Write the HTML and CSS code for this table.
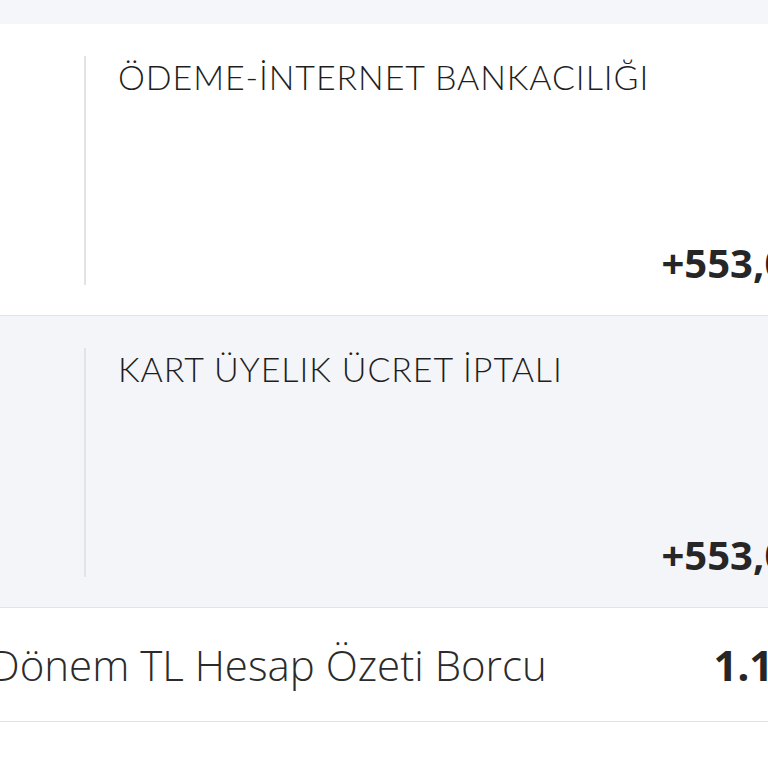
FILE: index.html
```html
<!DOCTYPE html>
<html lang="tr">
<head>
    <meta name="viewport" content="width=device-width, initial-scale=1">
    <title>Hesap Hareketleri</title>
    <link rel="stylesheet" href="styles.css">
</head>
<body>

<div class="page">
    <div class="top-strip"></div>

    <div class="txn">
        <div class="txn-body">
            <div class="txn-desc">ÖDEME-İNTERNET BANKACILIĞI</div>
            <div class="txn-amount">+553,00 TL</div>
        </div>
    </div>

    <div class="txn txn-alt">
        <div class="txn-body">
            <div class="txn-desc">KART ÜYELIK ÜCRET İPTALI</div>
            <div class="txn-amount">+553,00 TL</div>
        </div>
    </div>

    <div class="summary">
        <span class="summary-label">Dönem TL Hesap Özeti Borcu</span>
        <span class="summary-value">1.106,00 TL</span>
    </div>
</div>

</body>
</html>
```

FILE: styles.css
```css
html, body {
    margin: 0;
    padding: 0;
    background-color: #fff;
    overflow: hidden;
}

.page {
    width: 1000px;
    margin-left: -40px;
    font-family: "Lato", "Open Sans", sans-serif;
    color: #2d2d2d;
}

.top-strip {
    height: 24px;
    background-color: #f5f6f9;
}

.txn {
    display: flex;
    padding: 32px 0 30px;
    border-bottom: 1px solid #e2e3e7;
    background-color: #fff;
}

.txn-alt {
    background-color: #f4f5f9;
}

.txn-body {
    flex: 1;
    height: 229px;
    margin-left: 124px;
    padding-left: 32px;
    border-left: 2px solid #e1e3e6;
    display: flex;
    flex-direction: column;
    justify-content: space-between;
    box-sizing: border-box;
}

.txn-desc {
    font-size: 34px;
    font-weight: 300;
    line-height: 40px;
    margin-top: 1px;
    letter-spacing: 0.9px;
    color: #1e1e1e;
}

.txn-amount {
    align-self: flex-end;
    margin-right: 94px;
    font-family: "Noto Sans", "Open Sans", sans-serif;
    font-weight: 700;
    font-size: 40px;
    line-height: 44px;
    color: #262626;
    white-space: nowrap;
}

.summary {
    height: 113px;
    display: flex;
    align-items: center;
    justify-content: space-between;
    padding: 0 20px 0 30px;
    border-bottom: 1px solid #e2e3e7;
}

.summary-label {
    font-family: "Open Sans", sans-serif;
    font-weight: 300;
    font-size: 42px;
    color: #2b2b2b;
}

.summary-value {
    font-family: "Noto Sans", "Open Sans", sans-serif;
    font-weight: 700;
    font-size: 42px;
    color: #262626;
}
```
